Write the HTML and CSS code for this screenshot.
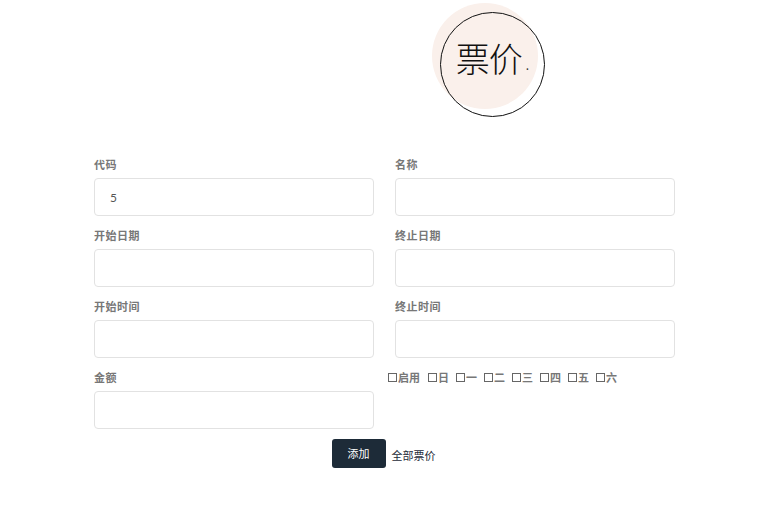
FILE: index.html
```html
<!DOCTYPE html>
<html lang="zh">
<head>
<meta charset="utf-8">
<link rel="stylesheet" href="styles.css">
</head>
<body>
<header class="header">
  <div class="badge"><span class="badge-text">票价</span><span class="dot">.</span></div>
</header>
<form class="form">
  <div class="grid">
    <div class="field">
      <label class="label">代码</label>
      <div class="input"><span class="value">5</span></div>
    </div>
    <div class="field">
      <label class="label">名称</label>
      <div class="input"></div>
    </div>
    <div class="field">
      <label class="label">开始日期</label>
      <div class="input"></div>
    </div>
    <div class="field">
      <label class="label">终止日期</label>
      <div class="input"></div>
    </div>
    <div class="field">
      <label class="label">开始时间</label>
      <div class="input"></div>
    </div>
    <div class="field">
      <label class="label">终止时间</label>
      <div class="input"></div>
    </div>
    <div class="field">
      <label class="label">金额</label>
      <div class="input"></div>
    </div>
    <div class="field">
      <div class="checks">
        <span class="check check-wide"><span class="box"></span>启用</span>
        <span class="check"><span class="box"></span>日</span>
        <span class="check"><span class="box"></span>一</span>
        <span class="check"><span class="box"></span>二</span>
        <span class="check"><span class="box"></span>三</span>
        <span class="check"><span class="box"></span>四</span>
        <span class="check"><span class="box"></span>五</span>
        <span class="check"><span class="box"></span>六</span>
      </div>
    </div>
  </div>
  <div class="actions">
    <button type="button" class="btn">添加</button>
    <a class="link" href="#">全部票价</a>
  </div>
</form>
</body>
</html>
```
FILE: styles.css
```css
html, body {
  margin: 0;
  padding: 0;
  background: #fff;
}
body {
  font-family: "Noto Sans CJK SC", "Noto Sans", sans-serif;
  color: #555;
}
.header {
  height: 153px;
  display: flex;
  padding-left: 440px;
  box-sizing: border-box;
  padding-top: 12px;
}
.badge {
  position: relative;
  width: 105px;
  height: 105px;
  display: flex;
  align-items: center;
  justify-content: center;
  padding-bottom: 14px;
  box-sizing: border-box;
  isolation: isolate;
}
.badge::before {
  content: "";
  position: absolute;
  left: -8px;
  top: -9px;
  width: 106px;
  height: 106px;
  border-radius: 50%;
  background: #faf0eb;
  z-index: -2;
}
.badge::after {
  content: "";
  position: absolute;
  left: 0;
  top: 0;
  width: 105px;
  height: 105px;
  box-sizing: border-box;
  border: 1px solid #111;
  border-radius: 50%;
  z-index: -1;
}
.badge-text {
  font-size: 34px;
  font-weight: 300;
  color: #111;
  line-height: 1;
  letter-spacing: -1px;
}
.dot {
  font-size: 12px;
  color: #333;
  margin-left: 4px;
  align-self: flex-end;
  margin-bottom: 30px;
}
.form {
  padding-left: 94px;
  width: 581px;
}
.grid {
  display: grid;
  grid-template-columns: 280px 280px;
  column-gap: 21px;
  row-gap: 0;
}
.field {
  display: flex;
  flex-direction: column;
  height: 71px;
}
.label {
  font-size: 11px;
  font-weight: 700;
  color: #777;
  letter-spacing: 0.5px;
  line-height: 14px;
  padding-top: 4px;
  height: 21px;
}
.input {
  height: 38px;
  border: 1px solid #e2e2e2;
  border-radius: 4px;
  box-sizing: border-box;
  display: flex;
  align-items: center;
  padding-left: 15px;
}
.value {
  font-family: "Lato", "Noto Sans", sans-serif;
  font-size: 12px;
  color: #555;
}
.checks {
  display: flex;
  margin-left: -7px;
  padding-top: 4px;
  font-size: 11px;
  font-weight: 700;
  color: #777;
  line-height: 14px;
}
.check {
  display: flex;
  align-items: center;
  width: 28px;
}
.check-wide {
  width: 40px;
}
.box {
  width: 7px;
  height: 7px;
  border: 1px solid #666;
  margin-right: 1px;
  flex: none;
}
.actions {
  display: flex;
  justify-content: center;
  align-items: center;
  gap: 6px;
  margin-top: 2px;
  margin-left: -2px;
}
.btn {
  width: 54px;
  height: 29px;
  background: #1d2b38;
  color: #fff;
  border: none;
  border-radius: 3px;
  font-family: "Noto Sans CJK SC", sans-serif;
  font-size: 11px;
  padding: 0;
  padding-bottom: 2px;
}
.link {
  font-size: 11px;
  color: #1d2b38;
  text-decoration: none;
  margin-top: 2px;
}
```
